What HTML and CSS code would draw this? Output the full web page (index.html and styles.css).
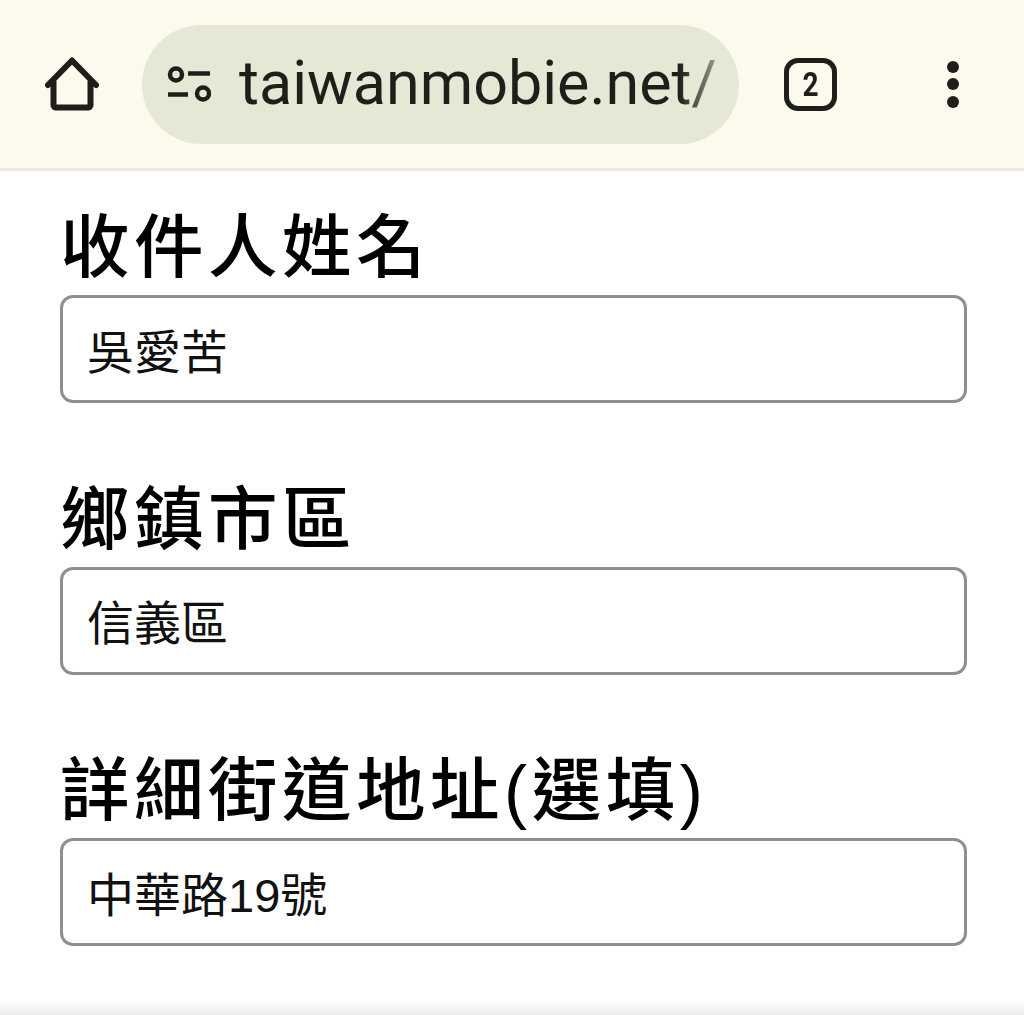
FILE: index.html
```html
<!DOCTYPE html>
<html lang="zh-Hant">
<head>
    <meta charset="UTF-8">
    <meta name="viewport" content="width=device-width, initial-scale=1.0">
    <title>收件資料</title>
    <link rel="stylesheet" href="styles.css">
</head>
<body>
    <header class="toolbar">
        <svg class="home-icon" viewBox="0 0 54 54" aria-hidden="true">
            <path d="M3 28 27 3.500 51 28M8.500 23v25a2.500 2.500 0 0 0 2.500 2.500h32a2.500 2.500 0 0 0 2.500-2.500V23" />
        </svg>
        <div class="omnibox">
            <svg class="tune-icon" viewBox="0 0 44 38" aria-hidden="true">
                <circle cx="9" cy="9.500" r="6" />
                <path d="M21 8.500h22M1 29.500h20" />
                <circle cx="36" cy="28.500" r="6" />
            </svg>
            <div class="url">taiwanmobie.net/</div>
        </div>
        <div class="tab-count"><span>2</span></div>
        <div class="menu-dots"><span></span><span></span><span></span></div>
    </header>

    <main class="form">
        <div class="field">
            <label for="name">收件人姓名</label>
            <input type="text" id="name" value="吳愛苦">
        </div>
        <div class="field">
            <label for="district">鄉鎮市區</label>
            <input type="text" id="district" value="信義區">
        </div>
        <div class="field">
            <label for="street">詳細街道地址(選填)</label>
            <input type="text" id="street" value="中華路19號">
        </div>
    </main>

    <div class="bottom-shade"></div>
</body>
</html>
```

FILE: styles.css
```css
* {
    box-sizing: border-box;
}
body {
    margin: 0;
    height: 1015px;
    overflow: hidden;
    display: flex;
    flex-direction: column;
    background-color: #fff;
    color: #000;
    font-family: "Liberation Sans", "Noto Sans CJK TC", sans-serif;
}
.toolbar {
    height: 171px;
    flex-shrink: 0;
    display: flex;
    align-items: center;
    padding-left: 45px;
    background-color: #fcfaec;
    border-bottom: 3px solid #e9eadb;
    color: #1e1f1a;
}
.home-icon {
    width: 54px;
    height: 54px;
    fill: none;
    stroke: #1e1f1a;
    stroke-width: 6;
    stroke-linecap: round;
    stroke-linejoin: round;
}
.omnibox {
    width: 597px;
    height: 119px;
    margin-left: 43px;
    padding: 0 24px 0 25px;
    display: flex;
    align-items: center;
    gap: 28px;
    border-radius: 60px;
    background-color: #e5e8d5;
}
.tune-icon {
    width: 44px;
    height: 38px;
    flex-shrink: 0;
    fill: none;
    stroke: #1e1f1a;
    stroke-width: 4.500;
}
.url {
    flex: 1;
    white-space: nowrap;
    font-family: Roboto, sans-serif;
    font-size: 61px;
    padding-bottom: 3px;
    -webkit-mask-image: linear-gradient(to right, #000 92%, rgba(0, 0, 0, 0.4) 100%);
    mask-image: linear-gradient(to right, #000 92%, rgba(0, 0, 0, 0.4) 100%);
}
.tab-count {
    width: 53px;
    height: 53px;
    margin-left: 45px;
    display: flex;
    align-items: center;
    justify-content: center;
    border: 5.500px solid #1e1f1a;
    border-radius: 14px;
    font-family: Roboto, sans-serif;
    font-size: 33px;
    font-weight: 700;
}
.tab-count span {
    transform: scaleX(0.85);
}
.menu-dots {
    margin-left: 110px;
    display: flex;
    flex-direction: column;
    gap: 5.500px;
}
.menu-dots span {
    width: 12px;
    height: 12px;
    border-radius: 50%;
    background-color: #1e1f1a;
}
.form {
    flex: 1;
    padding: 37px 57px 0 60px;
    display: flex;
    flex-direction: column;
    gap: 76.500px;
}
.field label {
    display: block;
    height: 87px;
    line-height: 80px;
    font-size: 69.500px;
    font-weight: 500;
    letter-spacing: 4.500px;
    white-space: nowrap;
}
.field input {
    display: block;
    width: 100%;
    height: 108px;
    padding: 0 24px 2px;
    border: 3px solid #8f8f8f;
    border-radius: 13px;
    outline: none;
    background-color: #fff;
    color: #111;
    font-family: "Liberation Sans", "Noto Sans CJK TC", sans-serif;
    font-size: 47px;
}
.bottom-shade {
    height: 15px;
    flex-shrink: 0;
    background: linear-gradient(to bottom, #fff, #ececec);
}
```
